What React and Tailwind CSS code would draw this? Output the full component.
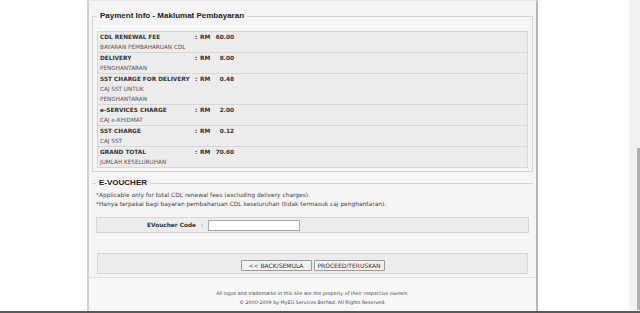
import React from "react";

const rows = [
  { label: "CDL RENEWAL FEE", sub: ["BAYARAN PEMBAHARUAN CDL"], amt: "60.00" },
  { label: "DELIVERY", sub: ["PENGHANTARAN"], amt: "8.00" },
  { label: "SST CHARGE FOR DELIVERY", sub: ["CAJ SST UNTUK", "PENGHANTARAN"], amt: "0.48" },
  { label: "e-SERVICES CHARGE", sub: ["CAJ e-KHIDMAT"], amt: "2.00" },
  { label: "SST CHARGE", sub: ["CAJ SST"], amt: "0.12" },
  { label: "GRAND TOTAL", sub: ["JUMLAH KESELURUHAN"], amt: "70.60" },
];

export default function App() {
  return (
    <div className="relative w-[640px] h-[313px] overflow-hidden bg-white font-['DejaVu_Sans',sans-serif]">
      <div className="flex h-[311px]">
        <div className="w-[629px] pl-[87px]">
          <div className="w-[451px] h-full border-x-2 border-l-[#d0d0d0] border-r-[#b8b8b8] border-t border-t-[#e6e6e6] bg-[#f5f5f5] flex flex-col px-[3px]">
            {/* Payment Info */}
            <fieldset className="mt-[10px] border border-[#d4d4d4] px-[4px] pt-[10px] pb-[3px]">
              <legend className="px-[3px] text-[8px] leading-[10px] font-bold text-[#222] font-['Liberation_Sans',sans-serif]">
                Payment Info - Maklumat Pembayaran
              </legend>
              <div className="border-t border-x border-[#d6d6d6] bg-[#ececec]">
                {rows.map((r) => (
                  <div key={r.label} className="flex pl-[2px] border-b border-[#d6d6d6] text-[5.8px] leading-[10px]">
                    <div className="w-[95px]">
                      <div className="font-bold text-[#333]">{r.label}</div>
                      {r.sub.map((s) => (
                        <div key={s} className="text-[5.7px] text-[#555]">{s}</div>
                      ))}
                    </div>
                    <div className="w-[5px] font-bold text-[#333]">:</div>
                    <div className="w-[13px] font-bold text-[#333]">RM</div>
                    <div className="w-[21px] text-right font-bold text-[#333]">{r.amt}</div>
                  </div>
                ))}
              </div>
            </fieldset>

            {/* E-Voucher */}
            <fieldset className="mt-[6px] border-t border-[#d4d4d4] px-[4px] pt-[3px] pb-[7px]">
              <legend className="px-[3px] text-[8px] leading-[10px] font-bold text-[#222] font-['Liberation_Sans',sans-serif]">
                E-VOUCHER
              </legend>
              <div className="text-[5.9px] leading-[9px] text-[#444]">
                <div>*Applicable only for total CDL renewal fees (excluding delivery charges).</div>
                <div>*Hanya terpakai bagi bayaran pembaharuan CDL keseluruhan (tidak termasuk caj penghantaran).</div>
              </div>
              <div className="mt-[8px] flex items-center h-[16px] border border-[#d6d6d6] bg-[#ececec] text-[5.8px]">
                <div className="w-[99px] text-right font-bold text-[#333]">EVoucher Code</div>
                <div className="w-[12px] text-center text-[#555]">:</div>
                <div className="w-[92px] h-[11px] border border-[#a8a8a8] bg-white" />
              </div>
            </fieldset>

            {/* Buttons */}
            <div className="mx-[5px] mt-[13px] flex justify-center gap-[2px] border border-[#d6d6d6] bg-[#ececec] pt-[6px] pb-[2px]">
              <button className="h-[11px] w-[71px] rounded-[1px] border border-[#9a9a9a] bg-[#f2f2f2] text-[6px] leading-[9px] text-[#333]">
                &lt;&lt; BACK/SEMULA
              </button>
              <button className="h-[11px] w-[71px] rounded-[1px] border border-[#9a9a9a] bg-[#f2f2f2] text-[6px] leading-[9px] text-[#333]">
                PROCEED/TERUSKAN
              </button>
            </div>

            {/* Footer */}
            <div className="mt-[3px] -mx-[3px] flex-1 border-t border-[#e2e2e2] bg-[#f8f8f8] pt-[11px] text-center text-[4.8px] leading-[9px] text-[#444]">
              <div>All logos and trademarks in this site are the property of their respective owners.</div>
              <div>© 2000-2009 by MyEG Services Berhad. All Rights Reserved.</div>
            </div>
          </div>
        </div>
        <div className="relative w-[11px] bg-[#f1f1f1]">
          <div className="absolute left-[8px] top-[148px] h-[162px] w-[3px] bg-[#b0b0b0]" />
        </div>
      </div>
      <div className="h-[2px] bg-[#5a5a5a]" />
    </div>
  );
}
